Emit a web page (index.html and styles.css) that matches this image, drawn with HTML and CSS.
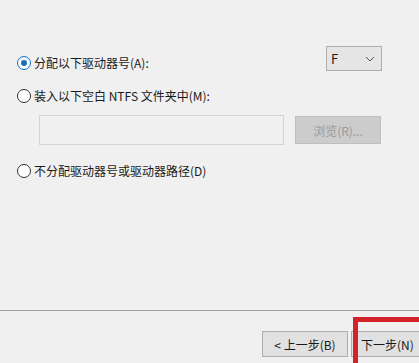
FILE: index.html
```html
<!DOCTYPE html>
<html lang="zh-CN">
<head>
    <meta charset="UTF-8">
    <title>分配驱动器号或路径</title>
    <link rel="stylesheet" href="styles.css">
</head>
<body>
    <div class="wizard">
        <div class="content">
            <div class="drive-row">
                <label class="option">
                    <span class="radio checked"></span>
                    分配以下驱动器号(A):
                </label>
                <div class="combo">
                    <span>F</span>
                    <svg width="10" height="6" viewBox="0 0 10 6"><path d="M1 1 L5 5 L9 1" fill="none" stroke="#555" stroke-width="1"/></svg>
                </div>
            </div>

            <label class="option option-mount">
                <span class="radio"></span>
                装入以下空白 NTFS 文件夹中(M):
            </label>

            <div class="folder-row">
                <div class="folder-input"></div>
                <button class="btn btn-disabled">浏览(R)...</button>
            </div>

            <label class="option option-none">
                <span class="radio"></span>
                不分配驱动器号或驱动器路径(D)
            </label>
        </div>

        <div class="footer">
            <button class="btn btn-back">&lt; 上一步(B)</button>
            <button class="btn btn-next">下一步(N)</button>
        </div>

        <!-- marca roja sobre el botón siguiente -->
        <div class="highlight"></div>
    </div>
</body>
</html>
```

FILE: styles.css
```css
/* Estilos generales */
body {
    margin: 0;
    background: #f0f0f0;
    font-family: "Noto Sans CJK SC", "Liberation Sans", sans-serif;
    font-size: 12px;
    color: #1a1a1a;
    overflow: hidden;
}

.wizard {
    position: relative;
    height: 363px;
    overflow: hidden;
    display: flex;
    flex-direction: column;
}

.content {
    flex: 1;
    padding: 46px 0 0 17px;
}

/* Opciones */
.option {
    display: flex;
    align-items: center;
    gap: 3px;
    height: 18px;
    line-height: 18px;
}

.radio {
    width: 12px;
    height: 12px;
    border: 1px solid #333;
    border-radius: 50%;
    background: #fff;
    position: relative;
    flex: none;
}

.radio.checked {
    border-color: #0a6fc8;
}

.radio.checked::after {
    content: "";
    position: absolute;
    left: 3px;
    top: 3px;
    width: 6px;
    height: 6px;
    border-radius: 50%;
    background: #1a6fbd;
}

.drive-row {
    display: flex;
    align-items: flex-start;
}

.drive-row .option {
    margin-top: 8px;
}

.combo {
    margin-left: auto;
    margin-right: 37px;
    width: 56px;
    height: 25px;
    border: 1px solid #adadad;
    background: #e5e5e5;
    display: flex;
    align-items: center;
    justify-content: space-between;
    padding: 0 6px 0 4px;
    box-sizing: border-box;
    font-size: 13px;
}

.option-mount {
    margin-top: 15px;
}

.folder-row {
    display: flex;
    align-items: flex-start;
    margin-top: 10px;
    padding-left: 22px;
}

.folder-input {
    width: 245px;
    height: 30px;
    box-sizing: border-box;
    border: 1px solid #d4d4d4;
    background: #f0f0f0;
}

/* Botones */
.btn {
    font-family: inherit;
    font-size: 12px;
    border: 1px solid #adadad;
    background: #e1e1e1;
    color: #1a1a1a;
    height: 26px;
    padding: 0;
    box-sizing: border-box;
}

.btn-disabled {
    margin-left: 11px;
    margin-top: 1px;
    width: 86px;
    height: 28px;
    background: #cccccc;
    border-color: #bfbfbf;
    color: #9a9a9a;
}

.option-none {
    margin-top: 17px;
}

.footer {
    flex: none;
    height: 53px;
    box-sizing: border-box;
    border-top: 1px solid #a0a0a0;
    display: flex;
    align-items: flex-start;
    padding: 20px 0 0 262px;
    gap: 3px;
    overflow: hidden;
}

.btn-back {
    width: 86px;
    flex: none;
}

.btn-next {
    width: 86px;
    flex: none;
    text-align: left;
    padding-left: 9px;
}

.highlight {
    position: absolute;
    left: 353px;
    top: 317px;
    right: 0;
    bottom: 0;
    border: 5px solid #d3222b;
    border-right: none;
    border-bottom: none;
}
```
